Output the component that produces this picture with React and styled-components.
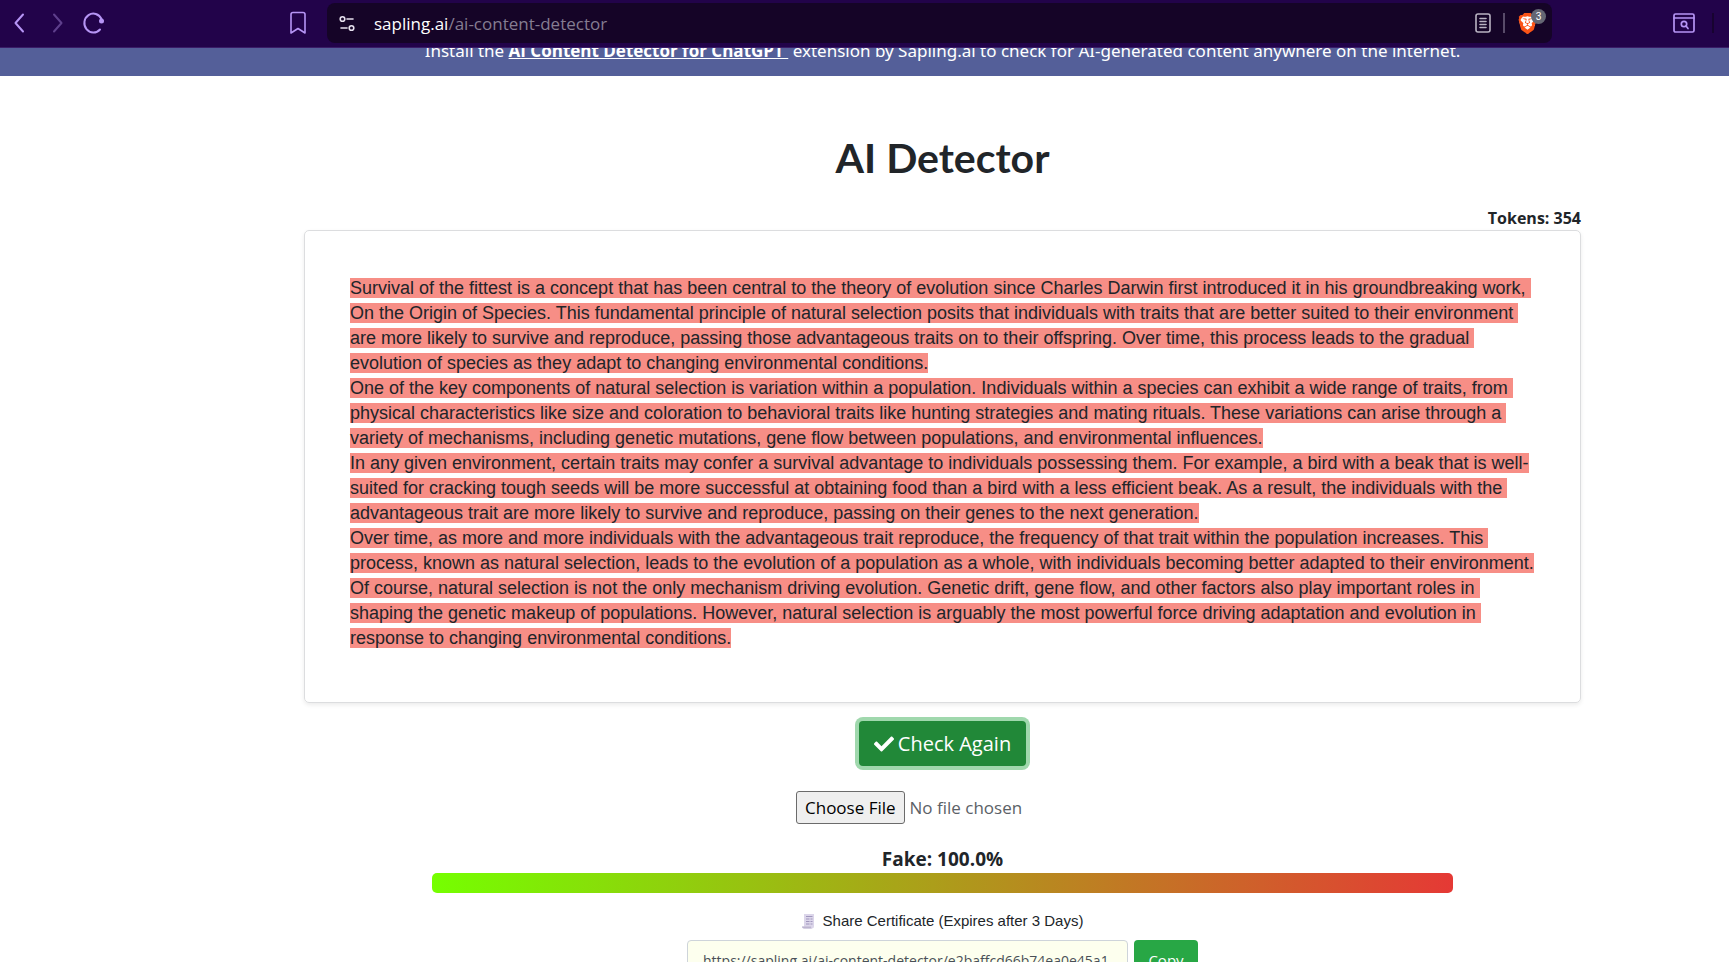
import React, { useState } from 'react';
import styled, { createGlobalStyle } from 'styled-components';
import { SiBrave } from 'react-icons/si';
import { FaCheck } from 'react-icons/fa';

const GlobalStyle = createGlobalStyle`
    * {
        box-sizing: border-box;
    }

    body {
        margin: 0;
        background: #fff;
        color: #212529;
        font-family: "Open Sans", "Noto Sans", sans-serif;
        font-size: 16px;
    }
`;

const Browser = styled.div`
    display: flex;
    flex-direction: column;
    height: 100vh;
    overflow: hidden;
`;

const Toolbar = styled.header`
    display: flex;
    align-items: center;
    flex-shrink: 0;
    height: 48px;
    padding: 0 7px 1px 8px;
    background: #22034a;
    border-bottom: 1px solid #3a1c68;
`;

const NavGroup = styled.div`
    display: flex;
    align-items: center;
    gap: 13px;
`;

const IconButton = styled.button`
    display: flex;
    align-items: center;
    justify-content: center;
    width: 24px;
    height: 24px;
    padding: 0;
    border: 0;
    background: none;
    color: ${({ $color }) => $color || '#b695f5'};
    cursor: pointer;
`;

const BookmarkButton = styled(IconButton)`
    margin-left: 180px;
    margin-right: 17px;
`;

const AddressBar = styled.div`
    display: flex;
    align-items: center;
    flex: 1;
    height: 40px;
    padding: 0 6px 0 8px;
    border-radius: 8px;
    background: #150427;
`;

const Url = styled.span`
    flex: 1;
    margin-left: 15px;
    color: #857d92;
    font-size: 17px;

    b {
        color: #fff;
        font-weight: 400;
    }
`;

const Divider = styled.span`
    width: 2px;
    height: 20px;
    margin: 0 8px;
    background: ${({ $dark }) => ($dark ? '#170330' : '#584b69')};
`;

const Shield = styled(IconButton)`
    position: relative;
    width: 33px;
    justify-content: flex-start;
    padding-left: 4px;
    color: #fb5417;

    svg {
        background: radial-gradient(circle at 50% 45%, #fff 50%, transparent 52%);
    }
`;

const Badge = styled.span`
    position: absolute;
    top: -2px;
    right: 0;
    width: 15px;
    height: 15px;
    border-radius: 50%;
    background: #646673;
    color: #fff;
    font-size: 10px;
    line-height: 15px;
    text-align: center;
`;

const ToolbarEnd = styled.div`
    display: flex;
    align-items: center;
    justify-content: flex-end;
    gap: 8px;
    width: 170px;
`;

const Banner = styled.div`
    display: flex;
    align-items: flex-end;
    justify-content: center;
    flex-shrink: 0;
    height: 28px;
    padding: 0 0 13px 156px;
    overflow: hidden;
    background: #545f99;
    color: #fff;
    font-family: "Noto Sans", "Open Sans", sans-serif;
    font-size: 17px;
    line-height: 24px;
    white-space: pre;

    a {
        color: #fff;
        font-family: "Open Sans", sans-serif;
        font-weight: 700;
    }
`;

const Page = styled.main`
    display: flex;
    flex-direction: column;
    align-items: center;
    padding: 56px 148px 0 304px;
`;

const Title = styled.h1`
    margin: 0;
    font-family: Lato, sans-serif;
    font-size: 41px;
    font-weight: 700;
    line-height: 52px;
`;

const Tokens = styled.div`
    align-self: flex-end;
    margin-top: 22px;
    font-size: 16px;
    font-weight: 700;
    line-height: 24px;
`;

const Card = styled.section`
    width: 100%;
    padding: 45px 45px 51px;
    border: 1px solid #dcdddf;
    border-radius: 5px;
    box-shadow: 0 2px 4px rgba(0, 0, 0, 0.08);
    font-family: "Liberation Sans", Arial, sans-serif;
    font-size: 18px;
    line-height: 25px;
`;

const Paragraph = styled.p`
    margin: 0;
    white-space: pre-wrap;
`;

const Highlight = styled.mark`
    background: #f78e86;
    color: #212529;
`;

const CheckButton = styled.button`
    display: flex;
    align-items: center;
    gap: 4px;
    height: 45px;
    margin-top: 18px;
    padding: 0 15px;
    border: 0;
    border-radius: 4px;
    background: #218838;
    box-shadow: 0 0 0 4px #a0d8ad;
    color: #fff;
    font-family: inherit;
    font-size: 20px;
    cursor: pointer;
`;

const FileInput = styled.input`
    width: 293px;
    margin-top: 25px;
    color: #5b6167;
    font-family: inherit;
    font-size: 17px;

    &::file-selector-button {
        height: 33px;
        margin-right: 5px;
        padding: 1px 8px;
        border: 1px solid #6b6b6b;
        border-radius: 3px;
        background: #efefef;
        color: #000;
        font-family: inherit;
        font-size: 17px;
    }
`;

const Score = styled.div`
    margin-top: 22px;
    font-size: 19px;
    font-weight: 700;
    line-height: 27px;
`;

const ScoreBar = styled.div`
    width: 80%;
    height: 20px;
    border-radius: 5px;
    background: linear-gradient(to right, #75ff00, #e53935);
`;

const ShareLabel = styled.label`
    display: flex;
    align-items: center;
    gap: 8px;
    margin-top: 17px;
    font-family: "Liberation Sans", Arial, sans-serif;
    font-size: 15px;
    line-height: 22px;
`;

const ShareRow = styled.div`
    display: flex;
    align-items: flex-start;
    gap: 6px;
    margin-top: 8px;
`;

const ShareInput = styled.input`
    width: 441px;
    height: 40px;
    padding: 0 15px;
    border: 1px solid #ced4da;
    border-radius: 4px;
    background: #fdffee;
    color: #495057;
    font-family: inherit;
    font-size: 14px;
`;

const CopyButton = styled.button`
    width: 64px;
    height: 40px;
    padding: 0;
    border: 0;
    border-radius: 4px;
    background: #28a745;
    color: #fff;
    font-family: inherit;
    font-size: 15px;
    cursor: pointer;
`;

const stroke = { fill: 'none', stroke: 'currentColor', strokeWidth: 2, strokeLinecap: 'round', strokeLinejoin: 'round' };

const BackIcon = () => (
    <svg width="24" height="24" viewBox="0 0 24 24" {...stroke}>
        <path d="M15 3.500L7.500 12L15 20.500" />
    </svg>
);

const ForwardIcon = () => (
    <svg width="24" height="24" viewBox="0 0 24 24" {...stroke}>
        <path d="M9 3.500L16.500 12L9 20.500" />
    </svg>
);

const ReloadIcon = () => (
    <svg width="24" height="24" viewBox="0 0 24 24" {...stroke}>
        <path d="M18 18.500A9 9.500 0 1 1 19.500 8" />
        <circle cx="19.500" cy="10" r="2.500" fill="currentColor" stroke="none" />
    </svg>
);

const BookmarkIcon = () => (
    <svg width="24" height="24" viewBox="0 0 24 24" {...stroke} strokeWidth="1.600">
        <path d="M5 3.500Q5 1.500 7 1.500H17Q19 1.500 19 3.500V22L12 17.500L5 22Z" />
    </svg>
);

const TuneIcon = () => (
    <svg width="24" height="24" viewBox="0 0 24 24" {...stroke} strokeWidth="1.600">
        <circle cx="7.500" cy="8" r="2.300" />
        <path d="M12 8H18" />
        <circle cx="16.500" cy="17" r="2.300" />
        <path d="M6 17H12" />
    </svg>
);

const ReaderIcon = () => (
    <svg width="24" height="24" viewBox="0 0 24 24" {...stroke} strokeWidth="1.600">
        <rect x="5" y="3" width="14" height="18" rx="2" />
        <path d="M9 7.500H15M9 10.500H15M9 13.500H15M9 16.500H15" />
    </svg>
);

const SearchTabsIcon = () => (
    <svg width="24" height="24" viewBox="0 0 24 24" {...stroke} strokeWidth="1.700">
        <rect x="2" y="3" width="20" height="18" rx="1.500" />
        <path d="M2 7H22" />
        <circle cx="12" cy="13" r="2.700" />
        <path d="M14 15L16 17.500" />
    </svg>
);

const ReceiptIcon = () => (
    <svg width="13" height="15" viewBox="0 0 13 15">
        <path d="M2 0H12V12.500Q12 14.500 10 14.500H2Q0 14.500 0 12.500H2Z" fill="#dcd6ea" />
        <path d="M0 12.500H9Q9 14.500 10 14.500H2Q0 14.500 0 12.500Z" fill="#bdb5d0" />
        <path d="M4 2.500H10.500M4 5H7.500M8.500 5H10.500M4 7.500H7.500M8.500 7.500H10.500M4 10H7.500M8.500 10H10.500" stroke="#a096bd" strokeWidth="1.200" />
    </svg>
);

const paragraphs = [
    'Survival of the fittest is a concept that has been central to the theory of evolution since Charles Darwin first introduced it in his groundbreaking work, On the Origin of Species. This fundamental principle of natural selection posits that individuals with traits that are better suited to their environment are more likely to survive and reproduce, passing those advantageous traits on to their offspring. Over time, this process leads to the gradual evolution of species as they adapt to changing environmental conditions.',
    'One of the key components of natural selection is variation within a population. Individuals within a species can exhibit a wide range of traits, from physical characteristics like size and coloration to behavioral traits like hunting strategies and mating rituals. These variations can arise through a variety of mechanisms, including genetic mutations, gene flow between populations, and environmental influences.',
    'In any given environment, certain traits may confer a survival advantage to individuals possessing them. For example, a bird with a beak that is well-suited for cracking tough seeds will be more successful at obtaining food than a bird with a less efficient beak. As a result, the individuals with the advantageous trait are more likely to survive and reproduce, passing on their genes to the next generation.',
    'Over time, as more and more individuals with the advantageous trait reproduce, the frequency of that trait within the population increases. This process, known as natural selection, leads to the evolution of a population as a whole, with individuals becoming better adapted to their environment.',
    'Of course, natural selection is not the only mechanism driving evolution. Genetic drift, gene flow, and other factors also play important roles in shaping the genetic makeup of populations. However, natural selection is arguably the most powerful force driving adaptation and evolution in response to changing environmental conditions.',
];

const App = () => {
    const [link, setLink] = useState('https://sapling.ai/ai-content-detector/e2baffcd66b74ea0e45a1');

    return (
        <>
            <GlobalStyle />
            <Browser>
                <Toolbar>
                    <NavGroup>
                        <IconButton aria-label="Back"><BackIcon /></IconButton>
                        <IconButton aria-label="Forward" $color="#5e3f8c"><ForwardIcon /></IconButton>
                        <IconButton aria-label="Reload"><ReloadIcon /></IconButton>
                    </NavGroup>
                    <BookmarkButton aria-label="Bookmark"><BookmarkIcon /></BookmarkButton>
                    <AddressBar>
                        <IconButton aria-label="Site settings" $color="#e6e0ee"><TuneIcon /></IconButton>
                        <Url><b>sapling.ai</b>/ai-content-detector</Url>
                        <IconButton aria-label="Reader mode" $color="#b9b3c2"><ReaderIcon /></IconButton>
                        <Divider />
                        <Shield aria-label="Shields">
                            <SiBrave size={21} />
                            <Badge>3</Badge>
                        </Shield>
                    </AddressBar>
                    <ToolbarEnd>
                        <IconButton aria-label="Search tabs"><SearchTabsIcon /></IconButton>
                        <Divider $dark />
                    </ToolbarEnd>
                </Toolbar>
                <Banner>
                    <span>
                        Install the <a href="#extension">{'AI Content Detector for ChatGPT '}</a> extension by Sapling.ai to check for AI-generated content anywhere on the internet.
                    </span>
                </Banner>
                <Page>
                    <Title>AI Detector</Title>
                    <Tokens>Tokens: 354</Tokens>
                    <Card>
                        {paragraphs.map((text, index) => (
                            <Paragraph key={index}>
                                <Highlight>{text}</Highlight>
                            </Paragraph>
                        ))}
                    </Card>
                    <CheckButton><FaCheck size={20} />Check Again</CheckButton>
                    <FileInput type="file" aria-label="Choose a file to check" />
                    <Score>Fake: 100.0%</Score>
                    <ScoreBar />
                    <ShareLabel htmlFor="share-link">
                        <ReceiptIcon />
                        Share Certificate (Expires after 3 Days)
                    </ShareLabel>
                    <ShareRow>
                        <ShareInput id="share-link" value={link} onChange={(e) => setLink(e.target.value)} />
                        <CopyButton>Copy</CopyButton>
                    </ShareRow>
                </Page>
            </Browser>
        </>
    );
};

export default App;
